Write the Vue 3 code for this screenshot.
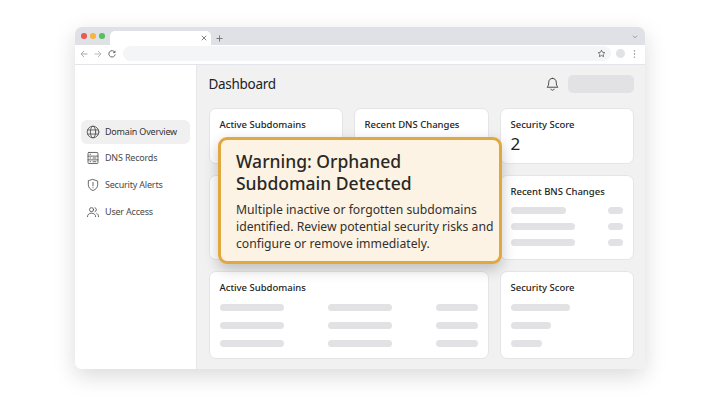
<script setup>
const navItems = [
  { label: 'Domain Overview', icon: 'globe', active: true },
  { label: 'DNS Records', icon: 'server' },
  { label: 'Security Alerts', icon: 'shield' },
  { label: 'User Access', icon: 'users' }
]

const rows = [1, 2, 3]
const scoreBars = [59, 40, 31]
</script>

<template>
  <div class="page">
    <div class="browser">
      <div class="tabbar">
        <div class="dots">
          <span class="dot red"></span>
          <span class="dot yellow"></span>
          <span class="dot green"></span>
        </div>
        <div class="tab">
          <svg width="6" height="6" viewBox="0 0 8 8" fill="none" stroke="#666" stroke-width="1.1"><path d="M1 1l6 6M7 1L1 7" /></svg>
        </div>
        <svg class="plus" width="7" height="7" viewBox="0 0 8 8" fill="none" stroke="#777" stroke-width="1.1"><path d="M4 .5v7M.5 4h7" /></svg>
        <svg class="chevron" width="6" height="4" viewBox="0 0 7 5" fill="none" stroke="#888" stroke-width="1"><path d="M1 1l2.5 2.5L6 1" /></svg>
      </div>

      <div class="toolbar">
        <svg width="8" height="8" viewBox="0 0 8 8" fill="none" stroke="#aaa" stroke-width="1"><path d="M7.5 4H1M4 1L1 4l3 3" /></svg>
        <svg width="8" height="8" viewBox="0 0 8 8" fill="none" stroke="#bbb" stroke-width="1"><path d="M.5 4H7M4 1l3 3-3 3" /></svg>
        <svg width="8" height="8" viewBox="0 0 8 8" fill="none" stroke="#666" stroke-width="1"><path d="M6.8 2.2A3.2 3.2 0 1 0 7.2 4.4M7 .8v1.8H5.2" /></svg>
        <div class="address">
          <svg width="9" height="9" viewBox="0 0 24 24" fill="none" stroke="#555" stroke-width="2" stroke-linejoin="round"><path d="M12 3l2.8 5.8 6.2.9-4.500 4.400 1.100 6.300L12 17.400l-5.600 3 1.100-6.300L3 9.700l6.200-.9z" /></svg>
        </div>
        <span class="avatar"></span>
        <svg class="kebab" width="3" height="8" viewBox="0 0 3 9" fill="#777"><circle cx="1.5" cy="1" r=".8" /><circle cx="1.5" cy="4.5" r=".8" /><circle cx="1.5" cy="8" r=".8" /></svg>
      </div>

      <div class="app">
        <aside class="sidebar">
          <div
            v-for="item in navItems"
            :key="item.label"
            class="nav-item"
            :class="{ active: item.active }"
          >
            <svg class="nav-icon" width="14" height="14" viewBox="0 0 24 24" fill="none" stroke="#555" stroke-width="1.5" stroke-linecap="round" stroke-linejoin="round">
              <template v-if="item.icon === 'globe'">
                <circle cx="12" cy="12" r="10" />
                <ellipse cx="12" cy="12" rx="4.5" ry="10" />
                <path d="M2.5 8.5h19M2.5 15.5h19" />
              </template>
              <template v-else-if="item.icon === 'server'">
                <rect x="3.5" y="2.5" width="17" height="19" rx="1.5" />
                <path d="M3.5 8.800h17M3.500 15.200h17M7 5.600h1M7 12h1M7 18.400h1M12 12h5M12 18.400h5" />
              </template>
              <template v-else-if="item.icon === 'shield'">
                <path d="M12 2.500l8 2.800v6.200c0 4.800-3.200 8.300-8 10-4.800-1.700-8-5.200-8-10V5.300z" />
                <path d="M12 7.500v6M12 16.500v.3" />
              </template>
              <template v-else>
                <circle cx="9.5" cy="8" r="3.5" />
                <path d="M2.500 20c0-3.700 2.800-6 7-6s7 2.300 7 6" />
                <path d="M15.500 4.700a3.500 3.500 0 0 1 0 6.600M18.500 14.500c2 .8 3 2.800 3 5.500" />
              </template>
            </svg>
            <span class="nav-label">{{ item.label }}</span>
          </div>
        </aside>

        <main class="main">
          <header class="main-header">
            <h1>Dashboard</h1>
            <svg class="bell" width="13" height="14" viewBox="0 0 24 26" fill="none" stroke="#444" stroke-width="1.8" stroke-linecap="round" stroke-linejoin="round">
              <path d="M12 2.500c-4.200 0-7 3.200-7 7.300 0 5-1.200 7.200-3 9.200h20c-1.800-2-3-4.200-3-9.200 0-4.100-2.800-7.300-7-7.300z" />
              <path d="M9 22.500c.6 1.300 1.600 2 3 2s2.400-.7 3-2" />
            </svg>
            <div class="profile"></div>
          </header>

          <div class="grid">
            <section class="card">
              <h2>Active Subdomains</h2>
            </section>
            <section class="card">
              <h2>Recent DNS Changes</h2>
            </section>
            <section class="card">
              <h2>Security Score</h2>
              <div class="score">2</div>
            </section>

            <section class="card wide"></section>
            <section class="card">
              <h2>Recent BNS Changes</h2>
              <div class="bars">
                <div v-for="row in rows" :key="row" class="bar-row split">
                  <span class="bar" :class="row === 1 ? 'w55' : 'w64'"></span>
                  <span class="bar w15"></span>
                </div>
              </div>
            </section>

            <section class="card wide">
              <h2>Active Subdomains</h2>
              <div class="bars loose">
                <div v-for="row in rows" :key="row" class="bar-row columns">
                  <span class="bar"></span>
                  <span class="bar"></span>
                  <span class="bar"></span>
                </div>
              </div>
            </section>
            <section class="card">
              <h2>Security Score</h2>
              <div class="bars loose">
                <div v-for="width in scoreBars" :key="width" class="bar-row">
                  <span class="bar" :style="{ width: width + 'px' }"></span>
                </div>
              </div>
            </section>
          </div>
        </main>

        <div class="warning">
          <h3>Warning: Orphaned Subdomain Detected</h3>
          <p>Multiple inactive or forgotten subdomains identified. Review potential security risks and configure or remove immediately.</p>
        </div>
      </div>
    </div>
  </div>
</template>

<style scoped>
.page {
  width: 720px;
  height: 401px;
  padding: 27px 75px 32px;
  box-sizing: border-box;
  background: #ffffff;
  font-family: "Noto Sans", "Open Sans", sans-serif;
  color: #222;
  overflow: hidden;
}

.browser {
  width: 570px;
  height: 342px;
  border-radius: 7px;
  background: #fff;
  box-shadow: 0 7px 22px rgba(0, 0, 0, 0.15);
  overflow: hidden;
  display: flex;
  flex-direction: column;
}

.tabbar {
  height: 18px;
  flex: none;
  background: #dfe1e7;
  display: flex;
  align-items: flex-end;
  padding-left: 6px;
  padding-right: 7px;
}

.dots {
  display: flex;
  gap: 3.5px;
  align-self: center;
  width: 29px;
  flex: none;
}

.dot {
  width: 5.5px;
  height: 5.5px;
  border-radius: 50%;
}

.red { background: #ea5a55; }
.yellow { background: #f3b63f; }
.green { background: #54c15c; }

.tab {
  width: 101px;
  height: 14px;
  background: #fff;
  border-radius: 5px 5px 0 0;
  display: flex;
  align-items: center;
  justify-content: flex-end;
  padding-right: 4px;
  box-sizing: border-box;
}

.plus {
  margin: 0 0 3.5px 5px;
}

.chevron {
  margin: 0 0 6px auto;
}

.toolbar {
  height: 19.5px;
  flex: none;
  box-sizing: border-box;
  background: #fff;
  border-bottom: 1px solid #e4e5e8;
  display: flex;
  align-items: center;
  gap: 6px;
  padding: 0 9px 1px 5px;
}

.address {
  width: 489px;
  height: 15px;
  margin-left: 1px;
  background: #f4f5f7;
  border-radius: 8px;
  display: flex;
  align-items: center;
  justify-content: flex-end;
  padding-right: 5px;
  box-sizing: border-box;
}

.avatar {
  width: 9px;
  height: 9px;
  margin-left: -1.5px;
  border-radius: 50%;
  background: #e2e3e7;
  flex: none;
}

.kebab {
  margin-left: 2px;
  flex: none;
}

.app {
  position: relative;
  flex: 1;
  display: flex;
  min-height: 0;
}

.sidebar {
  width: 122px;
  flex: none;
  box-sizing: border-box;
  background: #fff;
  border-right: 1px solid #e6e6e8;
  padding: 55px 6px 0;
  display: flex;
  flex-direction: column;
  gap: 2.7px;
}

.nav-item {
  height: 24px;
  display: flex;
  align-items: center;
  gap: 5px;
  padding-left: 5px;
  border-radius: 6px;
  font-size: 9px;
  letter-spacing: -0.2px;
  color: #4a4a4a;
}

.nav-item.active {
  background: #f0f0f1;
  color: #333;
}

.nav-icon {
  flex: none;
}

.nav-label {
  margin-bottom: 1px;
}

.main {
  flex: 1;
  min-width: 0;
  background: #f1f1f1;
  padding: 10px 11.5px 0;
}

.main-header {
  height: 18px;
  display: flex;
  align-items: center;
  margin-bottom: 15px;
}

.main-header h1 {
  margin: 0;
  font-size: 13.5px;
  font-weight: 400;
  letter-spacing: -0.3px;
  color: #222;
}

.bell {
  margin-left: auto;
  margin-right: 9px;
}

.profile {
  width: 66px;
  height: 18px;
  background: #e2e2e4;
  border-radius: 5px;
}

.grid {
  display: grid;
  grid-template-columns: 134px 135px 134px;
  grid-template-rows: 56px 85px 88px;
  gap: 11px;
}

.card {
  box-sizing: border-box;
  background: #fff;
  border: 1px solid #e5e5e7;
  border-radius: 7px;
  padding: 9px 10px 0;
}

.card h2 {
  margin: 0;
  font-size: 9.5px;
  line-height: 13px;
  font-weight: 500;
  color: #222;
}

.wide {
  grid-column: span 2;
}

.score {
  font-size: 17px;
  line-height: 20px;
  margin-top: 3.5px;
}

.bars {
  display: flex;
  flex-direction: column;
  gap: 9.2px;
  margin-top: 9px;
}

.bars.loose {
  gap: 11px;
  margin-top: 10px;
}

.bar-row {
  display: flex;
}

.bar-row.split {
  justify-content: space-between;
}

.bar-row.columns {
  display: grid;
  grid-template-columns: 64px 64px 42px;
  justify-content: space-between;
}

.bar {
  height: 7px;
  border-radius: 4px;
  background: #e2e2e4;
}

.w55 { width: 55px; }
.w64 { width: 64px; }
.w15 { width: 15px; }

.warning {
  position: absolute;
  left: 143px;
  top: 72px;
  width: 284px;
  height: 127.5px;
  box-sizing: border-box;
  padding: 10.5px 4.5px 0 15px;
  background: #fdf3e4;
  border: 3px solid #e3a73f;
  border-radius: 9px;
  box-shadow: 0 5px 14px rgba(0, 0, 0, 0.22);
}

.warning h3 {
  margin: 0 0 7px;
  font-size: 17.5px;
  line-height: 22px;
  font-weight: 500;
  color: #2b2824;
}

.warning p {
  margin: 0;
  font-size: 12.2px;
  line-height: 17px;
  color: #33302b;
}
</style>
